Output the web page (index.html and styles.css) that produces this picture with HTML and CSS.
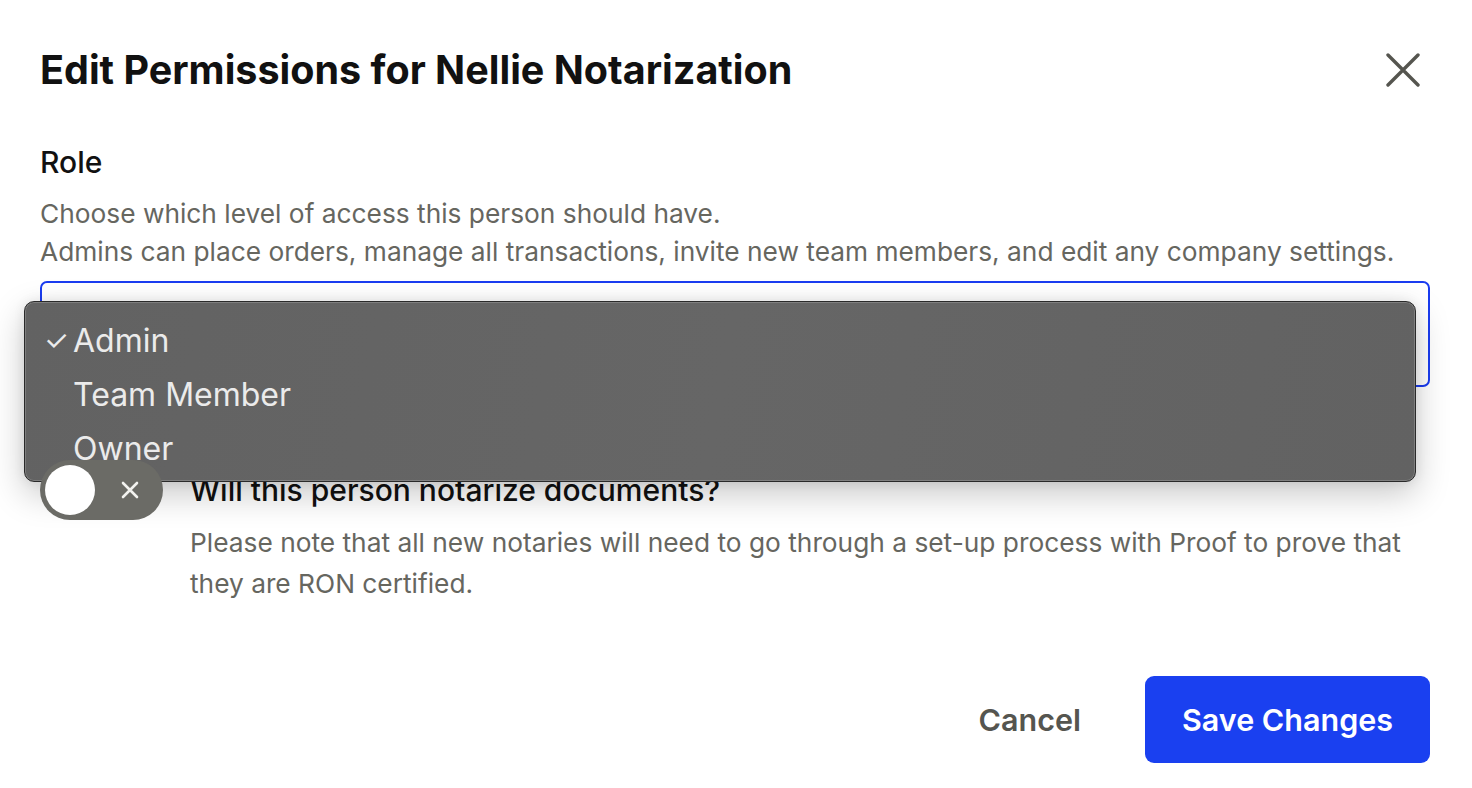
FILE: index.html
```html
<!DOCTYPE html>
<html lang="en">
<head>
<meta charset="utf-8">
<title>Edit Permissions</title>
<link rel="stylesheet" href="styles.css">
</head>
<body>
<div class="modal">
  <header class="modal-header">
    <h1 class="modal-title">Edit Permissions for Nellie Notarization</h1>
    <button class="close-btn" aria-label="Close">
      <svg width="34" height="34" viewBox="0 0 34 34"><path d="M2 2 L32 32 M32 2 L2 32" stroke="#55554f" stroke-width="3.4" stroke-linecap="round" fill="none"/></svg>
    </button>
  </header>

  <section class="role">
    <h2 class="label">Role</h2>
    <p class="desc">Choose which level of access this person should have.<br>Admins can place orders, manage all transactions, invite new team members, and edit any company settings.</p>
    <div class="select-wrap">
      <div class="select-field"></div>
      <ul class="menu">
        <li class="menu-item checked"><span class="check">✓</span>Admin</li>
        <li class="menu-item"><span class="check"></span>Team Member</li>
        <li class="menu-item"><span class="check"></span>Owner</li>
      </ul>
    </div>
  </section>

  <section class="notary">
    <div class="toggle-row">
      <div class="toggle">
        <span class="knob"></span>
        <svg class="toggle-x" width="18" height="18" viewBox="0 0 18 18"><path d="M2 2 L16 16 M16 2 L2 16" stroke="#f2f2ef" stroke-width="2.6" stroke-linecap="round"/></svg>
      </div>
      <h3 class="notary-title">Will this person notarize documents?</h3>
    </div>
    <p class="notary-desc">Please note that all new notaries will need to go through a set-up process with Proof to prove that they are RON certified.</p>
  </section>

  <footer class="actions">
    <button class="btn-cancel">Cancel</button>
    <button class="btn-save">Save Changes</button>
  </footer>
</div>
</body>
</html>
```

FILE: styles.css
```css
* { box-sizing: border-box; }
html, body { margin: 0; padding: 0; background: #ffffff; }
body {
  font-family: Inter, "Noto Sans", "Liberation Sans", sans-serif;
  color: #111111;
  width: 1472px;
  height: 788px;
  overflow: hidden;
}
.modal {
  padding: 46px 42px 0 40px;
}
.modal-header {
  display: flex;
  justify-content: space-between;
  align-items: center;
  height: 48px;
}
.modal-title {
  margin: 0;
  font-size: 39.5px;
  font-weight: 700;
  line-height: 48px;
  color: #111111;
}
.close-btn {
  background: none;
  border: 0;
  padding: 0;
  margin-right: 10px;
  width: 34px;
  height: 34px;
  display: flex;
}
.role { margin-top: 50px; }
.label {
  margin: 0;
  font-size: 30px;
  font-weight: 500;
  line-height: 36px;
  color: #111111;
}
.desc {
  margin: 15px 0 0;
  font-size: 26.3px;
  line-height: 38px;
  color: #66665f;
}
.select-wrap {
  position: relative;
  margin-top: 10px;
}
.select-field {
  height: 106px;
  border: 2.5px solid #1a3cf0;
  border-radius: 7px;
  background: #fff;
}
.menu {
  position: absolute;
  left: -16px;
  top: 20px;
  width: 1392px;
  height: 181px;
  margin: 0;
  padding: 11px 0 0;
  list-style: none;
  background: linear-gradient(100deg, #626262 0%, #666666 50%, #626262 100%);
  border: 1px solid #2a2a2a;
  border-radius: 10px;
  box-shadow: inset 0 0 0 1px rgba(255,255,255,0.18), 0 12px 34px rgba(0,0,0,0.22), 0 0 12px rgba(0,0,0,0.08);
}
.menu-item {
  display: flex;
  align-items: center;
  height: 54px;
  font-size: 32px;
  color: #ebebeb;
  padding-left: 19px;
}
.check {
  width: 29px;
  font-size: 28px;
  color: #ebebeb;
}
.notary { margin-top: 73px; }
.toggle-row {
  display: flex;
  align-items: center;
  gap: 27px;
}
.toggle {
  position: relative;
  width: 123px;
  height: 60px;
  border-radius: 30px;
  background: #6b6b66;
  display: flex;
  align-items: center;
  flex-shrink: 0;
}
.knob {
  width: 50px;
  height: 50px;
  margin-left: 5px;
  border-radius: 50%;
  background: #ffffff;
}
.toggle-x {
  margin-left: 26px;
}
.notary-title {
  margin: 0;
  font-size: 30px;
  font-weight: 500;
  line-height: 36px;
  color: #111111;
}
.notary-desc {
  margin: 2px 0 0 150px;
  font-size: 26.3px;
  line-height: 41px;
  color: #66665f;
}
.actions {
  display: flex;
  justify-content: flex-end;
  align-items: center;
  gap: 64px;
  margin-top: 72px;
}
.btn-cancel {
  background: none;
  border: 0;
  padding: 0;
  font-family: inherit;
  font-size: 30.5px;
  font-weight: 600;
  color: #55554f;
}
.btn-save {
  width: 285px;
  height: 87px;
  border: 0;
  border-radius: 9px;
  background: #1a40f0;
  color: #ffffff;
  font-family: inherit;
  font-size: 30.5px;
  font-weight: 600;
}
```
